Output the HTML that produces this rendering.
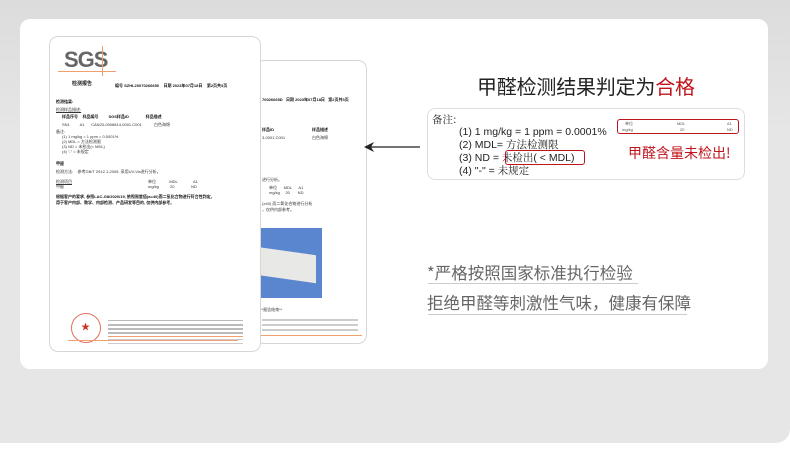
<!DOCTYPE html>
<html><head><meta charset="utf-8"><style>
*{margin:0;padding:0;box-sizing:border-box}
body{width:790px;height:461px;background:#fff;position:relative;overflow:hidden;font-family:"Liberation Sans","Noto Sans CJK SC",sans-serif}
.gray{position:absolute;left:0;top:0;width:790px;height:443px;background:linear-gradient(#dcdcdc,#e6e6e6 30%);border-bottom-right-radius:14px}
.card{position:absolute;left:20px;top:19px;width:748px;height:350px;background:#fff;border-radius:10px}
.doc{position:absolute;background:#fff;border:1px solid #d6d6d6;border-radius:9px;overflow:hidden}
.t{position:absolute;font-size:4px;color:#333;white-space:nowrap;line-height:5px}
.b{font-weight:bold;color:#111}
.ln{position:absolute;height:2px;background:#bbb}
.or{position:absolute;height:1px;background:#f0a070}
.title{position:absolute;left:477px;top:71px;font-size:20px;color:#222;font-family:"Noto Sans CJK SC",sans-serif;letter-spacing:-0.2px}
.box{position:absolute;left:427px;top:108px;width:318px;height:72px;border:1px solid #ddd;border-radius:8px;background:#fff}
.serif{font-family:"Noto Serif CJK SC",serif}
.s{position:absolute;font-size:10.5px;color:#222;white-space:nowrap;line-height:12px}
.bot{position:absolute;font-size:16.5px;color:#666;font-family:"Noto Sans CJK SC",sans-serif;white-space:nowrap}
</style></head><body>
<div class="gray"></div>
<div class="card"></div>

<!-- back doc -->
<div class="doc" style="left:255px;top:60px;width:112px;height:284px">
  <div class="t b" style="left:6px;top:36px">70026665D &nbsp; 日期 2023年07月18日 &nbsp; 第2页共3页</div>
  <div class="t b" style="left:6px;top:66px">样品ID</div><div class="t b" style="left:56px;top:66px">样品描述</div>
  <div class="t" style="left:6px;top:74px">3-0001.C001</div><div class="t" style="left:56px;top:74px">白色海绵</div>
  <div class="t" style="left:6px;top:116px">进行分析。</div>
  <div class="t" style="left:13px;top:124px">单位 &nbsp;&nbsp;&nbsp;&nbsp; MDL &nbsp;&nbsp;&nbsp;&nbsp; A1</div>
  <div class="t" style="left:13px;top:129px">mg/kg &nbsp;&nbsp;&nbsp; 20 &nbsp;&nbsp;&nbsp;&nbsp;&nbsp; ND</div>
  <div class="t" style="left:6px;top:140px">(≥40) 而二氧化合物进行分析</div>
  <div class="t" style="left:6px;top:146px">，仅供内部参考。</div>
  <div style="position:absolute;left:0;top:167px;width:66px;height:70px;background:#5a86d0"></div>
  <div style="position:absolute;left:0;top:190px;width:60px;height:28px;background:#e8e8e6;transform:skewY(8deg)"></div>
  <div class="t" style="left:4px;top:246px">**报告结束**</div>
  <div class="ln" style="left:6px;top:258px;width:96px;background:#ccc"></div>
  <div class="ln" style="left:6px;top:263px;width:96px;background:#ccc"></div>
  <div class="ln" style="left:6px;top:268px;width:96px;background:#ccc"></div>
  <div class="or" style="left:0;top:274px;width:106px"></div>
</div>

<!-- front doc -->
<div class="doc" style="left:49px;top:36px;width:212px;height:316px">
  <div style="position:absolute;left:14px;top:10px;font-size:22px;font-weight:bold;color:#666;letter-spacing:-1px">SGS</div>
  <div class="or" style="left:8px;top:34px;width:58px"></div>
  <div style="position:absolute;left:52px;top:9px;width:1px;height:30px;background:#f0a070"></div>
  <div class="t b" style="left:22px;top:45px;font-size:5px">检测报告</div>
  <div class="t b" style="left:65px;top:46px">编号 SZHL20070266650 &nbsp;&nbsp; 日期 2023年07月18日 &nbsp;&nbsp; 第2页共3页</div>
  <div class="t b" style="left:6px;top:62px">检测结果:</div>
  <div class="t" style="left:6px;top:70px;text-decoration:underline">检测样品描述:</div>
  <div class="t b" style="left:12px;top:77px">样品序号 &nbsp;&nbsp; 样品编号 &nbsp;&nbsp;&nbsp;&nbsp;&nbsp;&nbsp;&nbsp; SGS样品ID &nbsp;&nbsp;&nbsp;&nbsp;&nbsp;&nbsp;&nbsp;&nbsp;&nbsp;&nbsp;&nbsp;&nbsp;&nbsp; 样品描述</div>
  <div class="t" style="left:12px;top:85px">SN1 &nbsp;&nbsp;&nbsp;&nbsp;&nbsp;&nbsp;&nbsp; A1 &nbsp;&nbsp;&nbsp;&nbsp; CAN23-0008814-0001.C001 &nbsp;&nbsp;&nbsp;&nbsp;&nbsp;&nbsp;&nbsp;&nbsp;&nbsp; 白色海绵</div>
  <div class="t" style="left:6px;top:92px">备注:</div>
  <div class="t" style="left:12px;top:97px">(1) 1 mg/kg = 1 ppm = 0.0001%</div>
  <div class="t" style="left:12px;top:102px">(2) MDL = 方法检测限</div>
  <div class="t" style="left:12px;top:107px">(3) ND = 未检出(&lt; MDL)</div>
  <div class="t" style="left:12px;top:112px">(4) "-" = 未规定</div>
  <div class="t b" style="left:6px;top:124px">甲醛</div>
  <div class="t" style="left:6px;top:132px">检测方法: &nbsp;&nbsp; 参考GB/T 2912.1-2009, 采用UV-Vis进行分析。</div>
  <div class="t" style="left:6px;top:142px;text-decoration:underline">检测项目</div><div class="t" style="left:98px;top:142px">单位 &nbsp;&nbsp;&nbsp;&nbsp;&nbsp;&nbsp;&nbsp;&nbsp;&nbsp;&nbsp; MDL &nbsp;&nbsp;&nbsp;&nbsp;&nbsp;&nbsp;&nbsp;&nbsp;&nbsp;&nbsp;&nbsp;&nbsp; A1</div>
  <div class="t" style="left:6px;top:147px">甲醛</div><div class="t" style="left:98px;top:147px">mg/kg &nbsp;&nbsp;&nbsp;&nbsp;&nbsp;&nbsp;&nbsp;&nbsp; 20 &nbsp;&nbsp;&nbsp;&nbsp;&nbsp;&nbsp;&nbsp;&nbsp;&nbsp;&nbsp;&nbsp;&nbsp;&nbsp; ND</div>
  <div class="t b" style="left:6px;top:157px">根据客户的要求, 参照LAC-G8/2020/19, 依照限量值(a=40)而二氧化合物进行符合性判定。</div>
  <div class="t b" style="left:6px;top:163px">用于客户内部、教学、内部检测、产品研发等目的, 仅供内部参考。</div>
  <div style="position:absolute;left:21px;top:276px;width:30px;height:30px;border:1.5px solid #e07060;border-radius:50%"></div>
  <div style="position:absolute;left:31px;top:283px;color:#d03020;font-size:9px">★</div>
  <div class="ln" style="left:58px;top:283px;width:135px;background:#bbb;height:1px"></div>
  <div class="ln" style="left:58px;top:287px;width:135px;background:#bbb"></div>
  <div class="ln" style="left:58px;top:291px;width:135px;background:#bbb"></div>
  <div class="ln" style="left:58px;top:295px;width:135px;background:#bbb"></div>
  <div class="or" style="left:58px;top:299px;width:135px"></div>
  <div class="ln" style="left:58px;top:302px;width:135px;background:#ccc;height:1px"></div>
  <div class="ln" style="left:58px;top:306px;width:135px;background:#ccc;height:1px"></div>
  <div class="or" style="left:18px;top:303px;width:170px"></div>
</div>

<!-- arrow -->
<svg style="position:absolute;left:362px;top:140px" width="60" height="14"><line x1="4" y1="7" x2="58" y2="7" stroke="#222" stroke-width="1.2"/><path d="M2 7 L12 2 L9 7 L12 12 Z" fill="#222"/></svg>

<div class="title">甲醛检测结果判定为<span style="color:#c0141c">合格</span></div>

<div class="box">
  <div class="s serif" style="left:4px;top:5px">备注:</div>
  <div class="s" style="left:31px;top:17px">(1) 1 mg/kg = 1 ppm = 0.0001%</div>
  <div class="s" style="left:31px;top:30px">(2) MDL= <span class="serif">方法检测限</span></div>
  <div class="s" style="left:31px;top:43px">(3) ND = <span class="serif">未检出</span>( &lt; MDL)</div>
  <div style="position:absolute;left:77px;top:41px;width:80px;height:15px;border:1.3px solid #c0141c;border-radius:3px"></div>
  <div class="s" style="left:31px;top:56px">(4) "-" = <span class="serif">未规定</span></div>
  <div style="position:absolute;left:189px;top:10px;width:122px;height:15px;border:1.3px solid #c0141c;border-radius:3px"></div>
  <div class="t" style="left:197px;top:12px;color:#555">单位</div><div class="t" style="left:249px;top:12px;color:#555">MDL</div><div class="t" style="left:299px;top:12px;color:#555">A1</div>
  <div class="t" style="left:194px;top:18px;color:#555">mg/kg</div><div class="t" style="left:252px;top:18px;color:#555">20</div><div class="t" style="left:299px;top:18px;color:#555">ND</div>
  <div class="s" style="left:200px;top:36px;font-size:14px;line-height:16px;color:#c0141c;font-family:'Noto Sans CJK SC',sans-serif">甲醛含量未检出!</div>
</div>

<div class="bot" style="left:427px;top:260px">*严格按照国家标准执行检验</div>
<div style="position:absolute;left:428px;top:283px;width:210px;height:1px;background:#ccc"></div>
<div class="bot" style="left:427px;top:290px">拒绝甲醛等刺激性气味，健康有保障</div>
<div style="position:absolute;left:428px;top:314px;width:259px;height:1px;background:#ccc"></div>
</body></html>
